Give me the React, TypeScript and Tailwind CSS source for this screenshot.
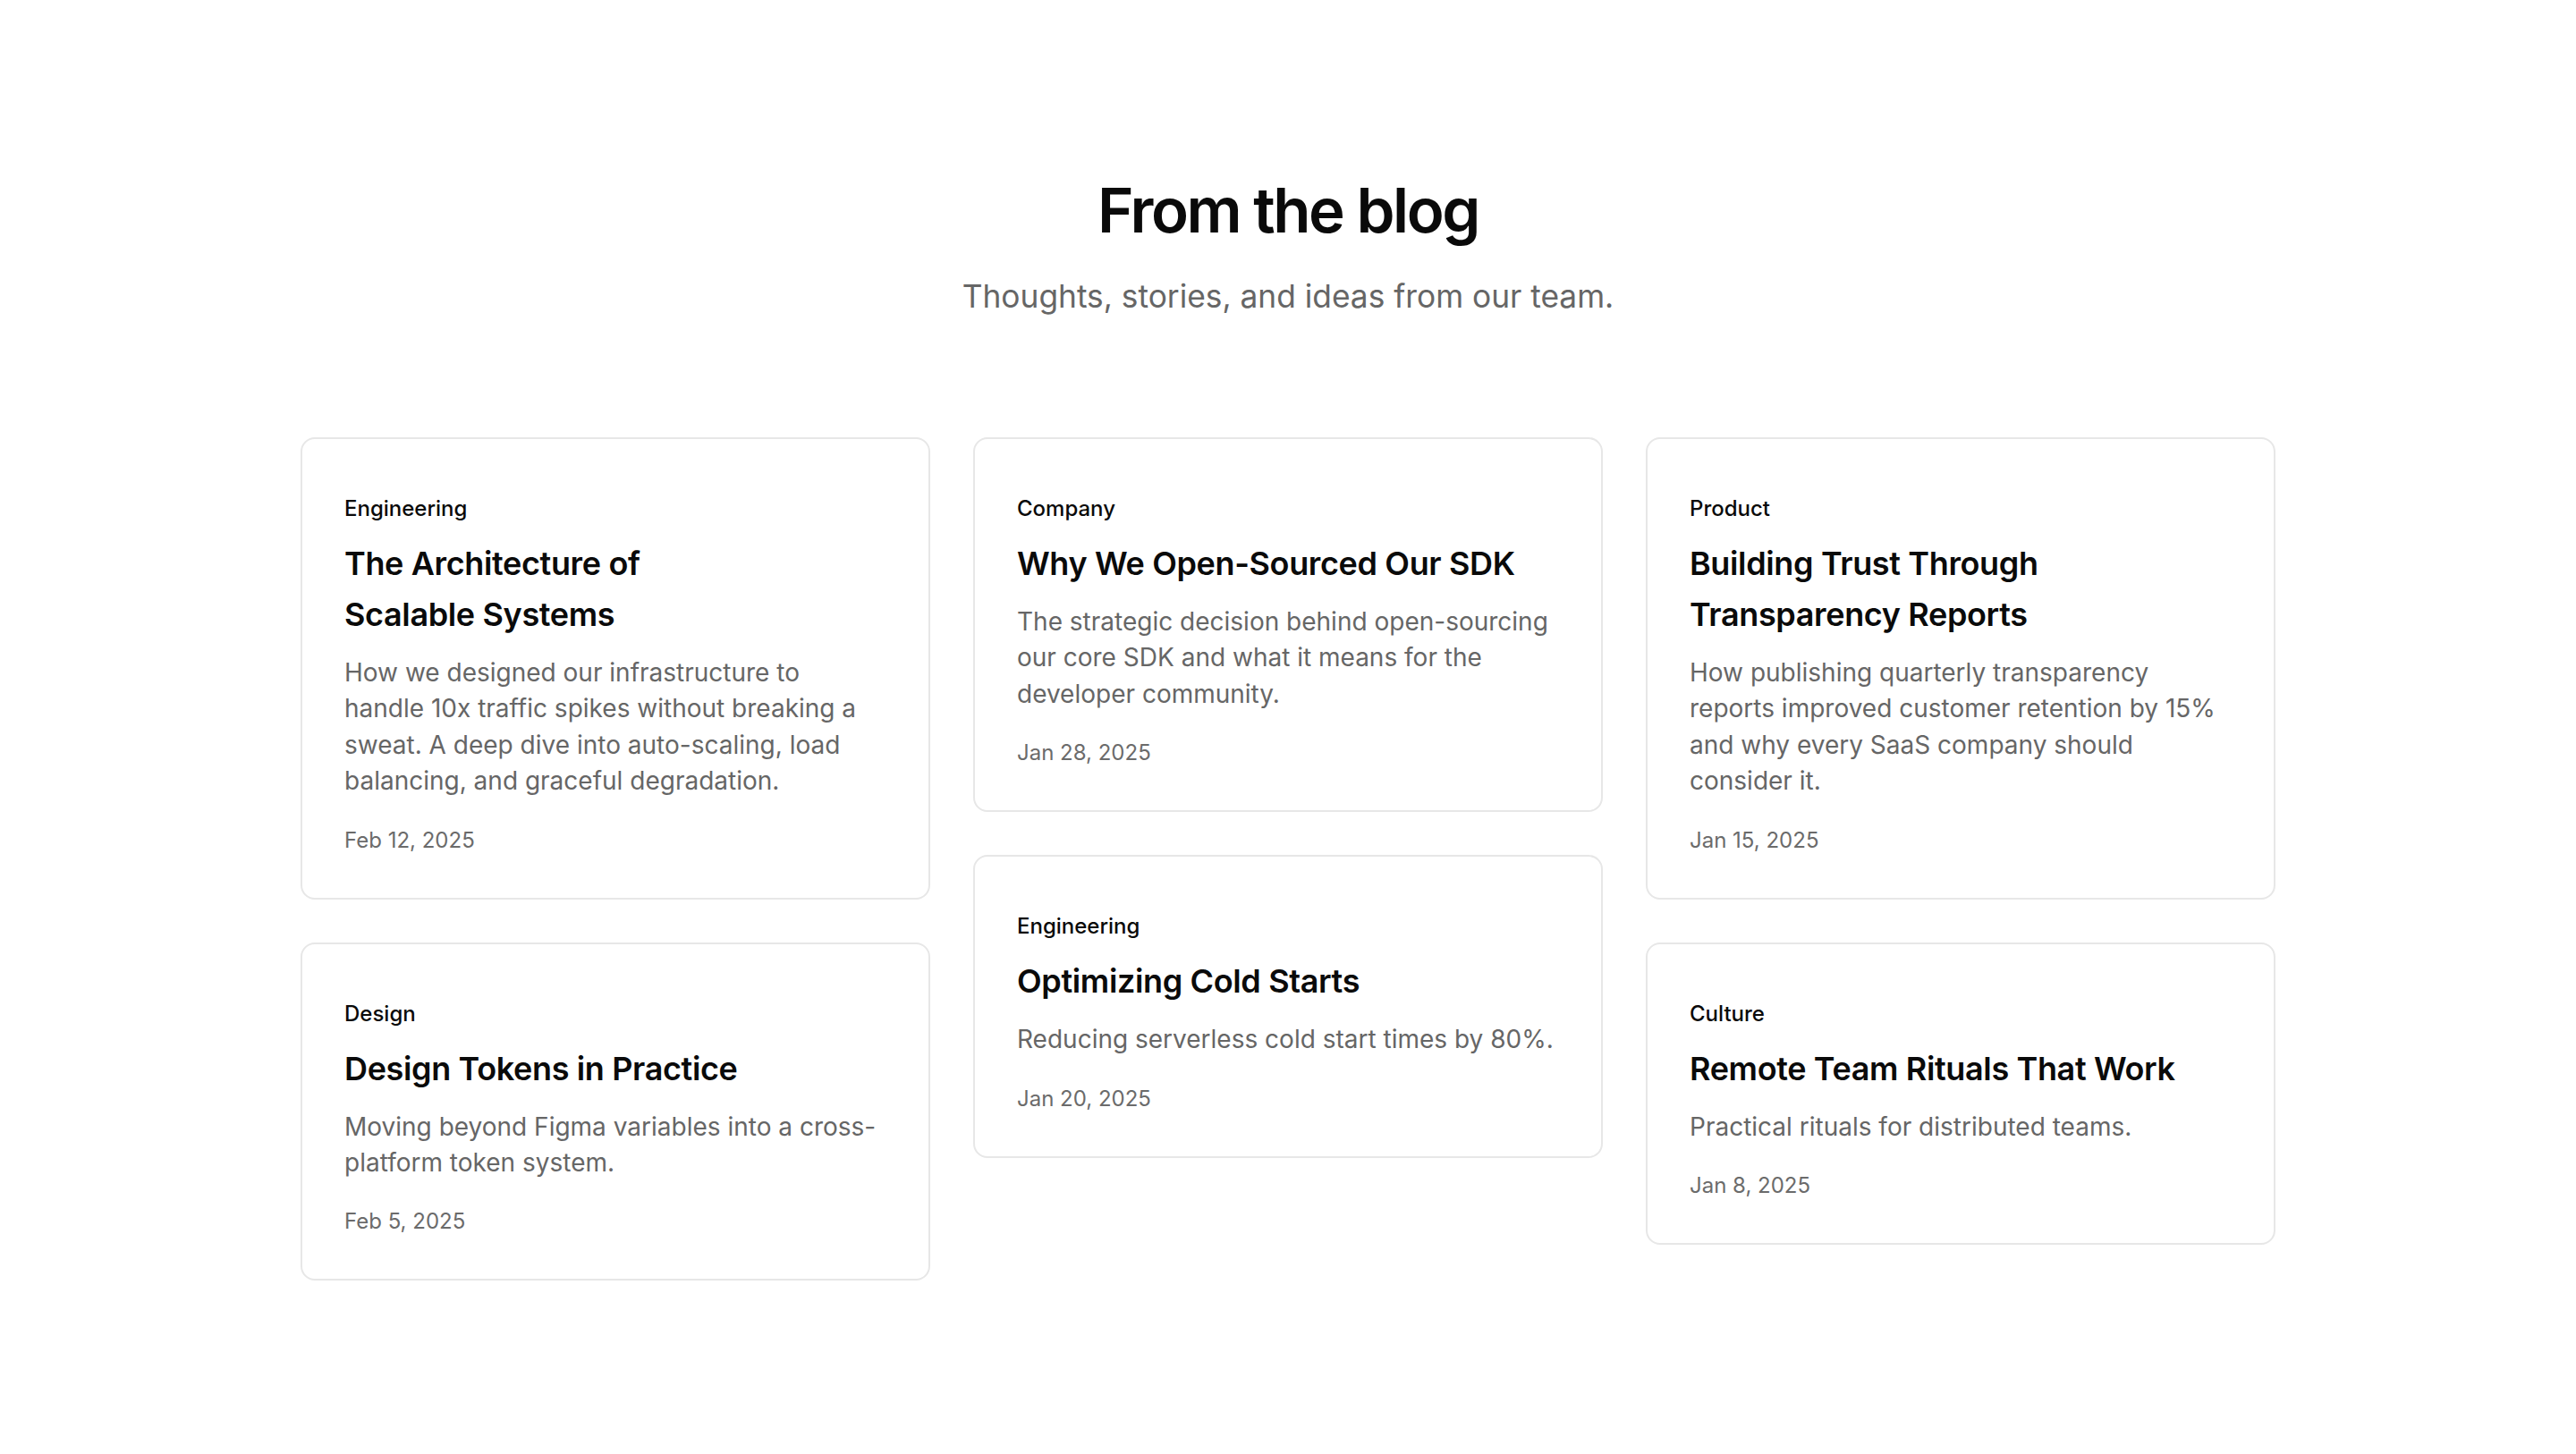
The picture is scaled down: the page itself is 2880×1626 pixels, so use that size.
type Post = {
  category: string;
  title: string[];
  excerpt: string;
  date: string;
};

const columns: Post[][] = [
  [
    {
      category: 'Engineering',
      title: ['The Architecture of', 'Scalable Systems'],
      excerpt:
        'How we designed our infrastructure to handle 10x traffic spikes without breaking a sweat. A deep dive into auto-scaling, load balancing, and graceful degradation.',
      date: 'Feb 12, 2025',
    },
    {
      category: 'Design',
      title: ['Design Tokens in Practice'],
      excerpt: 'Moving beyond Figma variables into a cross-platform token system.',
      date: 'Feb 5, 2025',
    },
  ],
  [
    {
      category: 'Company',
      title: ['Why We Open-Sourced Our SDK'],
      excerpt:
        'The strategic decision behind open-sourcing our core SDK and what it means for the developer community.',
      date: 'Jan 28, 2025',
    },
    {
      category: 'Engineering',
      title: ['Optimizing Cold Starts'],
      excerpt: 'Reducing serverless cold start times by 80%.',
      date: 'Jan 20, 2025',
    },
  ],
  [
    {
      category: 'Product',
      title: ['Building Trust Through', 'Transparency Reports'],
      excerpt:
        'How publishing quarterly transparency reports improved customer retention by 15% and why every SaaS company should consider it.',
      date: 'Jan 15, 2025',
    },
    {
      category: 'Culture',
      title: ['Remote Team Rituals That Work'],
      excerpt: 'Practical rituals for distributed teams.',
      date: 'Jan 8, 2025',
    },
  ],
];

function PostCard({ post }: { post: Post }) {
  return (
    <article className="rounded-[16px] border-2 border-[#e7e7e7] bg-white pt-[60px] pr-[51px] pb-[46px] pl-[47px]">
      <p className="text-[24px] leading-[36px] font-medium text-[#0a0a0a]">{post.category}</p>
      <h3 className="mt-[15px] text-[36px] leading-[57px] font-semibold tracking-[-0.01em] text-[#0a0a0a]">
        {post.title.map((line) => (
          <span key={line} className="block">
            {line}
          </span>
        ))}
      </h3>
      <p className="mt-[16px] text-[28px] leading-[40.4px] text-[#666666]">{post.excerpt}</p>
      <p className="mt-[28px] text-[24px] leading-[36px] text-[#6b6b6b]">{post.date}</p>
    </article>
  );
}

export default function App() {
  return (
    <div className="min-h-[1626px] bg-white font-['Inter',sans-serif] antialiased">
      <section className="mx-auto w-[2208px] pt-[190px] pb-[160px]">
        <header className="text-center">
          <h2 className="text-[69px] leading-[90px] font-semibold tracking-[-0.035em] text-[#0a0a0a]">
            From the blog
          </h2>
          <p className="mt-[26px] text-[35.3px] leading-[52px] text-[#666666]">
            Thoughts, stories, and ideas from our team.
          </p>
        </header>
        <div className="mt-[131px] grid grid-cols-3 items-start gap-[48px]">
          {columns.map((col, i) => (
            <div key={i} className="flex flex-col gap-[48px]">
              {col.map((post) => (
                <PostCard key={post.title.join(' ')} post={post} />
              ))}
            </div>
          ))}
        </div>
      </section>
    </div>
  );
}
